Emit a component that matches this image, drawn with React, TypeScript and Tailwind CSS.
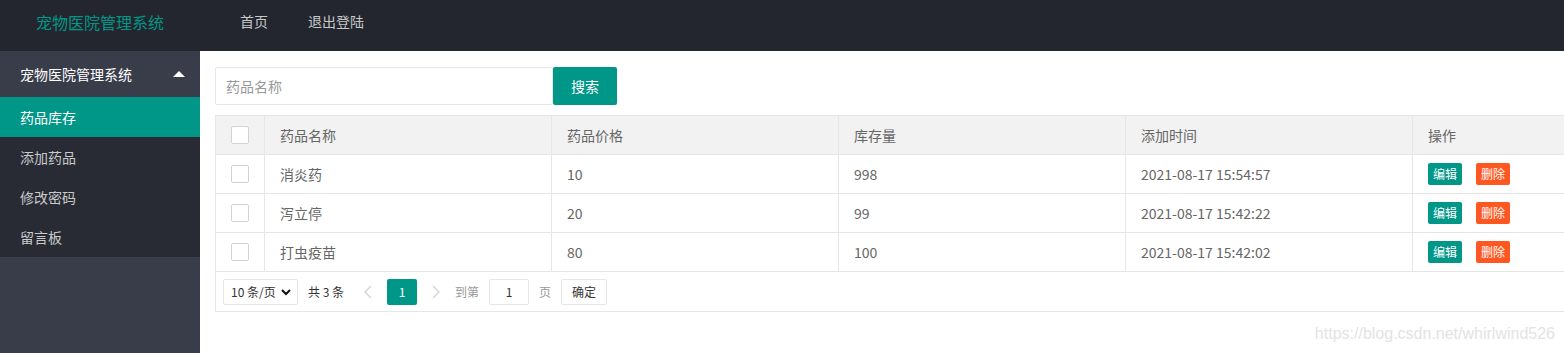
import React from "react";

type Drug = {
  name: string;
  price: string;
  stock: string;
  addedAt: string;
};

const DRUGS: Drug[] = [
  { name: "消炎药", price: "10", stock: "998", addedAt: "2021-08-17 15:54:57" },
  { name: "泻立停", price: "20", stock: "99", addedAt: "2021-08-17 15:42:22" },
  { name: "打虫疫苗", price: "80", stock: "100", addedAt: "2021-08-17 15:42:02" },
];

const MENU = ["添加药品", "修改密码", "留言板"];

function Checkbox() {
  return <div className="h-[18px] w-[18px] rounded-[2px] border border-[#d2d2d2] bg-white" />;
}

export default function App() {
  return (
    <div
      className="flex h-[353px] w-[1564px] flex-col overflow-hidden bg-white text-[14px] text-[#666]"
      style={{ fontFamily: '"Noto Sans CJK SC", "Liberation Sans", sans-serif' }}
    >
      {/* header */}
      <header className="flex h-[51px] shrink-0 items-center bg-[#23262e]">
        <div className="w-[200px] pb-[8px] pl-[36px] text-[16px] text-[#009688]">宠物医院管理系统</div>
        <nav className="flex gap-[40px] pb-[8px] pl-[40px] text-[rgba(255,255,255,0.75)]">
          <span>首页</span>
          <span>退出登陆</span>
        </nav>
      </header>

      <div className="flex min-h-0 flex-1">
        {/* sidebar */}
        <aside className="w-[200px] shrink-0 bg-[#393d49]">
          <div className="flex h-[46px] items-center justify-between pl-[20px] pr-[10px] text-white">
            <span>宠物医院管理系统</span>
            <span className="mr-[5px] h-0 w-0 border-x-[6px] border-b-[6px] border-x-transparent border-b-white" />
          </div>
          <div className="flex h-[40px] items-center bg-[#009688] pl-[20px] text-white">药品库存</div>
          {MENU.map((item) => (
            <div
              key={item}
              className="flex h-[40px] items-center bg-[#282b33] pl-[20px] text-[rgba(255,255,255,0.75)]"
            >
              {item}
            </div>
          ))}
        </aside>

        {/* main */}
        <main className="relative min-w-0 flex-1 overflow-hidden px-[15px] pt-[16px]">
          <div className="flex">
            <input
              placeholder="药品名称"
              className="h-[38px] w-[338px] rounded-[2px] border border-[#e6e6e6] px-[10px] text-[14px] outline-none placeholder:text-[#999]"
            />
            <button className="h-[38px] w-[64px] rounded-[2px] bg-[#009688] text-[14px] text-white">搜索</button>
          </div>

          <div className="mt-[10px] w-[1484px]">
            <table className="w-full table-fixed border-collapse">
              <colgroup>
                <col className="w-[49px]" />
                <col className="w-[287px]" />
                <col className="w-[287px]" />
                <col className="w-[287px]" />
                <col className="w-[287px]" />
                <col />
              </colgroup>
              <thead>
                <tr className="h-[39px] bg-[#f2f2f2] text-left">
                  <th className="border border-[#e6e6e6] px-[15px] font-normal">
                    <Checkbox />
                  </th>
                  {["药品名称", "药品价格", "库存量", "添加时间", "操作"].map((h) => (
                    <th key={h} className="border border-[#e6e6e6] px-[15px] font-normal">
                      {h}
                    </th>
                  ))}
                </tr>
              </thead>
              <tbody>
                {DRUGS.map((d) => (
                  <tr key={d.addedAt} className="h-[39px]">
                    <td className="border border-[#e6e6e6] px-[15px]">
                      <Checkbox />
                    </td>
                    <td className="border border-[#e6e6e6] px-[15px]">{d.name}</td>
                    <td className="border border-[#e6e6e6] px-[15px]">{d.price}</td>
                    <td className="border border-[#e6e6e6] px-[15px]">{d.stock}</td>
                    <td className="border border-[#e6e6e6] px-[15px]">{d.addedAt}</td>
                    <td className="border border-[#e6e6e6] px-[15px]">
                      <div className="flex gap-[14px]">
                        <span className="flex h-[22px] items-center rounded-[2px] bg-[#009688] px-[5px] text-[12px] text-white">
                          编辑
                        </span>
                        <span className="flex h-[22px] items-center rounded-[2px] bg-[#ff5722] px-[5px] text-[12px] text-white">
                          删除
                        </span>
                      </div>
                    </td>
                  </tr>
                ))}
              </tbody>
            </table>

            {/* pagination */}
            <div className="flex h-[40px] items-center border-x border-b border-[#e6e6e6] px-[7px] text-[12px] text-[#333]">
              <div className="flex h-[26px] w-[75px] items-center justify-between rounded-[2px] border border-[#e6e6e6] pl-[7px] pr-[6px]">
                <span>10 条/页</span>
                <svg width="10" height="8" viewBox="0 0 10 8">
                  <path d="M1 2 L5 6 L9 2" fill="none" stroke="#111" strokeWidth="2" />
                </svg>
              </div>
              <span className="ml-[10px]">共 3 条</span>
              <svg className="ml-[19px]" width="10" height="14" viewBox="0 0 10 14">
                <path d="M8 1 L2 7 L8 13" fill="none" stroke="#d2d2d2" strokeWidth="1.3" />
              </svg>
              <span className="ml-[14px] flex h-[26px] w-[30px] items-center justify-center rounded-[2px] bg-[#009688] text-white">
                1
              </span>
              <svg className="ml-[14px]" width="10" height="14" viewBox="0 0 10 14">
                <path d="M2 1 L8 7 L2 13" fill="none" stroke="#d2d2d2" strokeWidth="1.3" />
              </svg>
              <span className="ml-[14px] text-[#999]">到第</span>
              <span className="ml-[10px] flex h-[26px] w-[40px] items-center justify-center rounded-[2px] border border-[#e6e6e6]">
                1
              </span>
              <span className="ml-[10px] text-[#999]">页</span>
              <span className="ml-[10px] flex h-[26px] w-[46px] items-center justify-center rounded-[2px] border border-[#e6e6e6] bg-white">
                确定
              </span>
            </div>
          </div>

          <div
            className="absolute bottom-[7px] right-[9px] text-[16px] text-[#e3e3e3]"
            style={{ fontFamily: '"Liberation Sans", sans-serif' }}
          >
            https://blog.csdn.net/whirlwind526
          </div>
        </main>
      </div>
    </div>
  );
}
